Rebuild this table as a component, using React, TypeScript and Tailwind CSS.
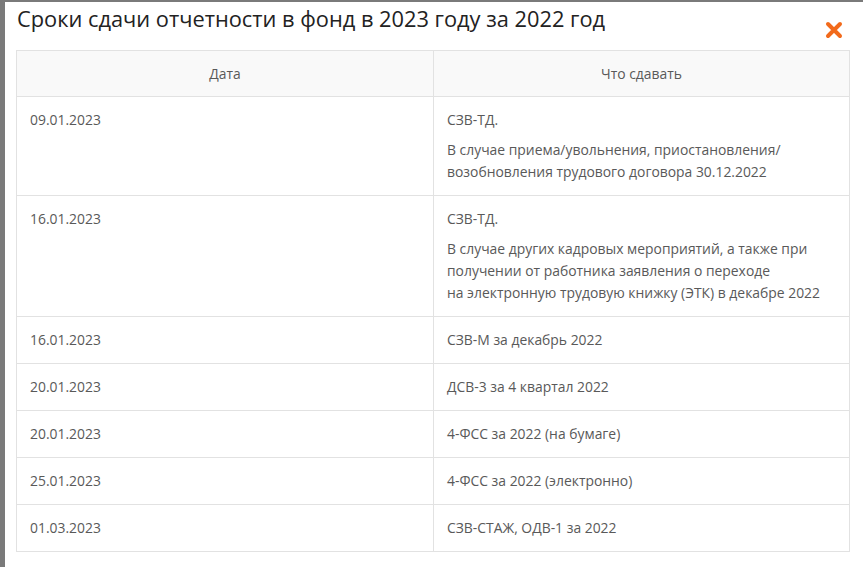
const rows: { date: string; title: string; note?: string[] }[] = [
  {
    date: '09.01.2023',
    title: 'СЗВ-ТД.',
    note: ['В случае приема/увольнения, приостановления/', 'возобновления трудового договора 30.12.2022'],
  },
  {
    date: '16.01.2023',
    title: 'СЗВ-ТД.',
    note: [
      'В случае других кадровых мероприятий, а также при',
      'получении от работника заявления о переходе',
      'на электронную трудовую книжку (ЭТК) в декабре 2022',
    ],
  },
  { date: '16.01.2023', title: 'СЗВ-М за декабрь 2022' },
  { date: '20.01.2023', title: 'ДСВ-3 за 4 квартал 2022' },
  { date: '20.01.2023', title: '4-ФСС за 2022 (на бумаге)' },
  { date: '25.01.2023', title: '4-ФСС за 2022 (электронно)' },
  { date: '01.03.2023', title: 'СЗВ-СТАЖ, ОДВ-1 за 2022' },
]

export default function App() {
  return (
    <div className="flex h-[567px] w-[863px] bg-[#7a7a7a] pl-[5px] pt-[2px] font-['Open_Sans',sans-serif]">
      <div className="flex-1 bg-white">
        <div className="flex items-start justify-between pl-[12px] pr-[20px] pt-[3px]">
          <h1 className="text-[21.8px] leading-[28px] text-[#222]">
            Сроки сдачи отчетности в фонд в 2023 году за 2022 год
          </h1>
          <button className="mt-[16px] text-[#f26a1b]" aria-label="Закрыть">
            <svg width="18" height="18" viewBox="0 0 18 18">
              <path d="M3 3L15 15M15 3L3 15" stroke="currentColor" strokeWidth="4" strokeLinecap="round" />
            </svg>
          </button>
        </div>
        <table className="ml-[11px] mt-[11px] w-[834px] border-collapse text-[13.9px] leading-[22px] text-[#595959]">
          <thead>
            <tr className="bg-[#f9f9f9]">
              <th className="h-[46px] w-[417px] border border-[#e2e2e2] font-normal">Дата</th>
              <th className="border border-[#e2e2e2] font-normal">Что сдавать</th>
            </tr>
          </thead>
          <tbody>
            {rows.map((r, i) => (
              <tr key={i}>
                <td className="border border-[#e2e2e2] px-[13px] py-3 align-top">{r.date}</td>
                <td className="border border-[#e2e2e2] px-[13px] py-3 align-top">
                  <p>{r.title}</p>
                  {r.note && (
                    <p className="mt-[8px]">
                      {r.note.map((l, j) => (
                        <span key={j} className="block">
                          {l}
                        </span>
                      ))}
                    </p>
                  )}
                </td>
              </tr>
            ))}
          </tbody>
        </table>
      </div>
    </div>
  )
}
